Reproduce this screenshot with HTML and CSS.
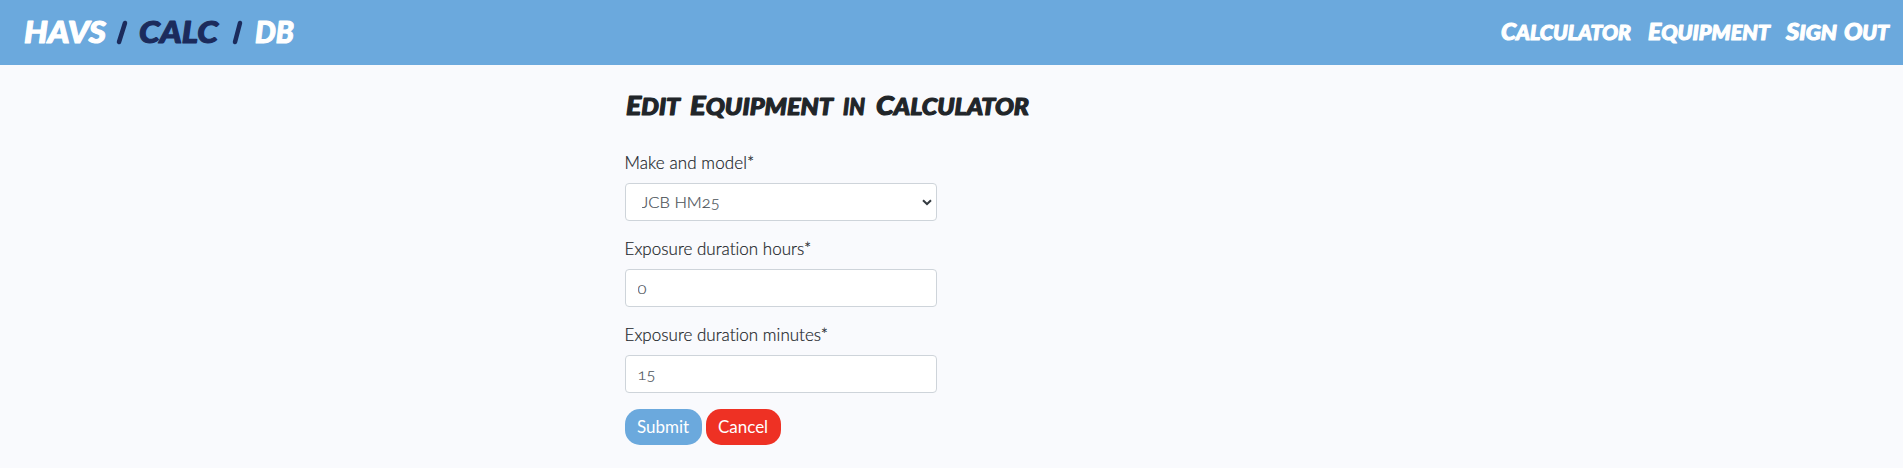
FILE: index.html
```
<!DOCTYPE html>
<html lang="en">
<head>
<meta charset="utf-8">
<title>HAVS / CALC / DB</title>
<link rel="stylesheet" href="styles.css">
</head>
<body>
<header class="header">
  <a class="brand"><svg class="marker brand-art" width="280" height="65" viewBox="0 0 280 65">
    <text x="1" y="43" textLength="82" lengthAdjust="spacingAndGlyphs">HAVS</text>
    <g class="navy"><path class="slash" d="M96 42L102 23"/><text x="116" y="43" textLength="79" lengthAdjust="spacingAndGlyphs">CALC</text><path class="slash" d="M212 42L217 23"/></g>
    <text x="232" y="43" textLength="39" lengthAdjust="spacingAndGlyphs">DB</text>
  </svg></a>
  <nav class="nav">
    <a><svg class="marker nav-art" width="132" height="65" viewBox="0 0 132 65"><text x="2" y="40" textLength="130" lengthAdjust="spacingAndGlyphs">C<tspan class="small">ALCULATOR</tspan></text></svg></a>
    <a><svg class="marker nav-art" width="126" height="65" viewBox="0 0 126 65"><text x="1" y="40" textLength="122" lengthAdjust="spacingAndGlyphs">E<tspan class="small">QUIPMENT</tspan></text></svg></a>
    <a><svg class="marker nav-art" width="108" height="65" viewBox="0 0 108 65"><text x="1" y="40" textLength="51" lengthAdjust="spacingAndGlyphs">S<tspan class="small">IGN</tspan></text><text x="59" y="40" textLength="45" lengthAdjust="spacingAndGlyphs">O<tspan class="small">UT</tspan></text></svg></a>
  </nav>
</header>
<main class="content">
  <h1 class="title"><svg class="marker title-art" width="410" height="40" viewBox="0 0 410 40">
    <text x="1" y="25" textLength="54" lengthAdjust="spacingAndGlyphs">E<tspan class="small">DIT</tspan></text>
    <text x="65" y="25" textLength="143" lengthAdjust="spacingAndGlyphs">E<tspan class="small">QUIPMENT</tspan></text>
    <text class="small" x="218" y="25" textLength="22" lengthAdjust="spacingAndGlyphs">IN</text>
    <text x="251" y="25" textLength="153" lengthAdjust="spacingAndGlyphs">C<tspan class="small">ALCULATOR</tspan></text>
  </svg></h1>
  <form class="form">
    <div class="field">
      <label class="label label-make" for="make">Make and model*</label>
      <div class="select-wrap">
        <select class="control select" id="make"><option>JCB HM25</option></select>
        <svg class="chevron" width="10" height="7" viewBox="0 0 10 7"><path d="M1 1.2L5 5L9 1.2"/></svg>
      </div>
    </div>
    <div class="field">
      <label class="label" for="hours">Exposure duration hours*</label>
      <input class="control" id="hours" type="text" value="0">
    </div>
    <div class="field">
      <label class="label" for="minutes">Exposure duration minutes*</label>
      <input class="control" id="minutes" type="text" value="15">
    </div>
    <div class="actions">
      <button class="button submit" type="button">Submit</button>
      <button class="button cancel" type="button">Cancel</button>
    </div>
  </form>
</main>
</body>
</html>
```
FILE: styles.css
```
* { box-sizing: border-box; }
body {
  margin: 0;
  min-height: 468px;
  background: #f9fafd;
  color: #212529;
  font: 300 17px/24px Lato, "Open Sans", sans-serif;
  font-variant-numeric: oldstyle-nums;
}
.header {
  display: flex;
  justify-content: space-between;
  height: 65px;
  padding: 0 10px 0 23px;
  background: #6ba9dd;
  color: #fff;
}
.nav { display: flex; gap: 16px; }
.nav a:last-child { margin-left: -4px; }
.marker {
  display: block;
  overflow: visible;
  fill: currentColor;
  stroke: currentColor;
  stroke-width: 1.1;
  stroke-linejoin: round;
  font-family: Lato, sans-serif;
  font-weight: 900;
  font-style: italic;
}
.brand-art { font-size: 30px; }
.navy { color: #1b2b5c; fill: currentColor; stroke: currentColor; }
.slash { stroke-width: 4.5; stroke-linecap: round; }
.nav-art { font-size: 23.5px; }
.nav-art .small { font-size: 20.5px; }
.title-art { font-size: 26px; }
.title-art .small { font-size: 22.5px; }
.content { width: 654px; margin: 25px auto 0; }
.title { height: 61px; margin: 0; }
.form { width: 312px; }
.field { margin-bottom: 16px; }
.label {
  display: block;
  width: max-content;
  margin-bottom: 8px;
  letter-spacing: .02px;
  -webkit-text-stroke: .2px currentColor;
}
.label-make { letter-spacing: .1px; }
.control {
  display: block;
  width: 100%;
  height: 38px;
  padding: 6px 12px;
  border: 1px solid #ced4da;
  border-radius: 4px;
  background: #fff;
  color: #495057;
  font: inherit;
  font-size: 16.5px;
  font-variant-numeric: oldstyle-nums;
  -webkit-text-stroke: .2px currentColor;
}
.select-wrap { position: relative; }
.select { appearance: none; padding-left: 16px; }
.chevron {
  position: absolute;
  right: 5px;
  top: 16px;
  fill: none;
  stroke: #343a40;
  stroke-width: 2;
}
.actions { display: flex; gap: 4px; }
.button {
  height: 36px;
  padding: 0 0 1px;
  border: 0;
  border-radius: 15px;
  color: #fff;
  font: 400 17px/24px Lato, "Open Sans", sans-serif;
}
.submit { width: 77px; background: #6ba9dd; }
.cancel { width: 75px; background: #ee3124; }
```
